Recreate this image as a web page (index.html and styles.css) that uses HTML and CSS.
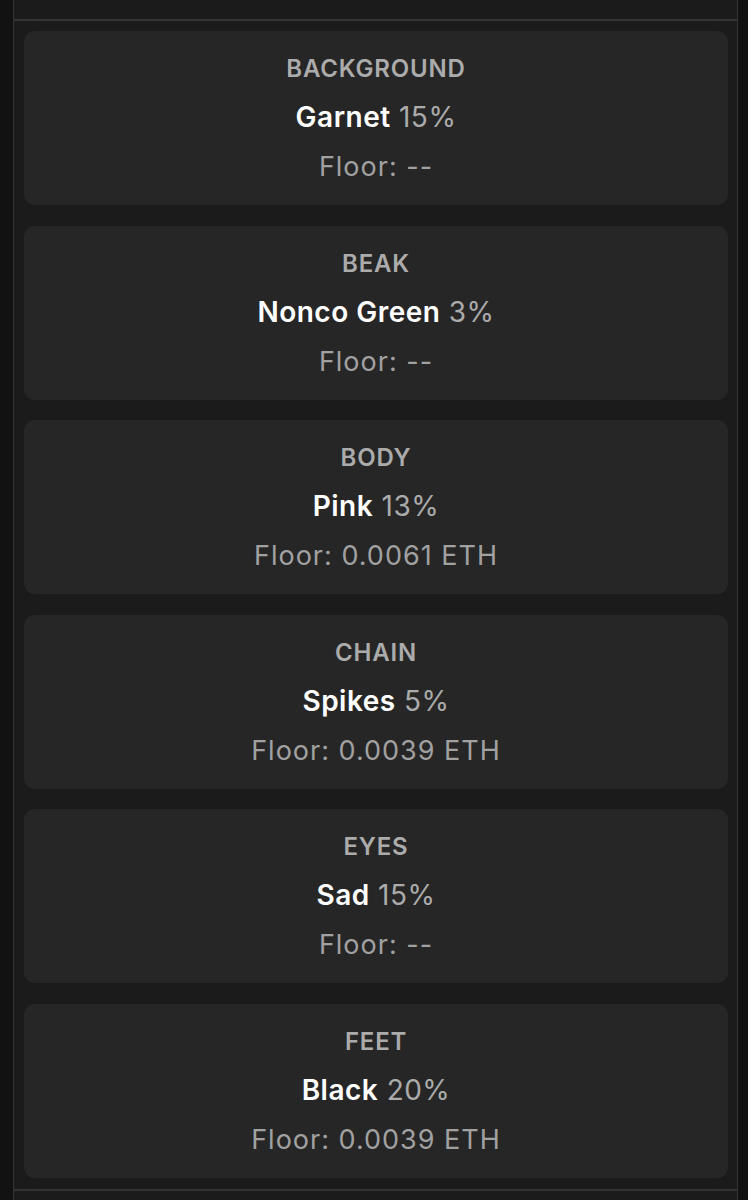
FILE: index.html
```html
<!DOCTYPE html>
<html>
	<head>
		<link rel="stylesheet" href="styles.css">
	</head>
	<body>
		<div class="panel">
			<div class="panel-top"></div>

			<div class="traits">
				<div class="trait">
					<div class="trait-type">BACKGROUND</div>
					<div class="trait-value"><b>Garnet</b> 15%</div>
					<div class="trait-floor">Floor: --</div>
				</div>

				<div class="trait">
					<div class="trait-type">BEAK</div>
					<div class="trait-value"><b>Nonco Green</b> 3%</div>
					<div class="trait-floor">Floor: --</div>
				</div>

				<div class="trait">
					<div class="trait-type">BODY</div>
					<div class="trait-value"><b>Pink</b> 13%</div>
					<div class="trait-floor">Floor: 0.0061 ETH</div>
				</div>

				<div class="trait">
					<div class="trait-type">CHAIN</div>
					<div class="trait-value"><b>Spikes</b> 5%</div>
					<div class="trait-floor">Floor: 0.0039 ETH</div>
				</div>

				<div class="trait">
					<div class="trait-type">EYES</div>
					<div class="trait-value"><b>Sad</b> 15%</div>
					<div class="trait-floor">Floor: --</div>
				</div>

				<div class="trait">
					<div class="trait-type">FEET</div>
					<div class="trait-value"><b>Black</b> 20%</div>
					<div class="trait-floor">Floor: 0.0039 ETH</div>
				</div>
			</div>

			<div class="panel-bottom"></div>
		</div>
	</body>
</html>
```

FILE: styles.css
```css
html, body {
	margin: 0;
	padding: 0;
	background-color: #121212;
	font-family: Inter, "Noto Sans", sans-serif;
}

.panel {
	margin-left: 13px;
	width: 723px;
	height: 1200px;
	overflow: hidden;
	background-color: #1b1b1b;
	border-left: 1px solid #333333;
	border-right: 1px solid #333333;
}

.panel-top {
	height: 19px;
	border-bottom: 2px solid #333333;
}

.traits {
	display: flex;
	flex-direction: column;
	gap: 20.6px;
	padding: 10px 9px 11px 10px;
	border-bottom: 2px solid #333333;
}

.trait {
	height: 174px;
	box-sizing: border-box;
	padding-top: 13px;
	background-color: #262626;
	border-radius: 11px;
	text-align: center;
}

.trait-type,
.trait-value,
.trait-floor {
	line-height: 49px;
}

.trait-type {
	font-size: 24px;
	font-weight: 600;
	letter-spacing: 0.8px;
	color: #ababab;
}

.trait-value {
	font-size: 28px;
	letter-spacing: 0.5px;
	color: #ababab;
}

.trait-value b {
	font-weight: 600;
	color: #ffffff;
}

.trait-floor {
	font-size: 27px;
	letter-spacing: 1px;
	color: #a1a1a1;
}
```
